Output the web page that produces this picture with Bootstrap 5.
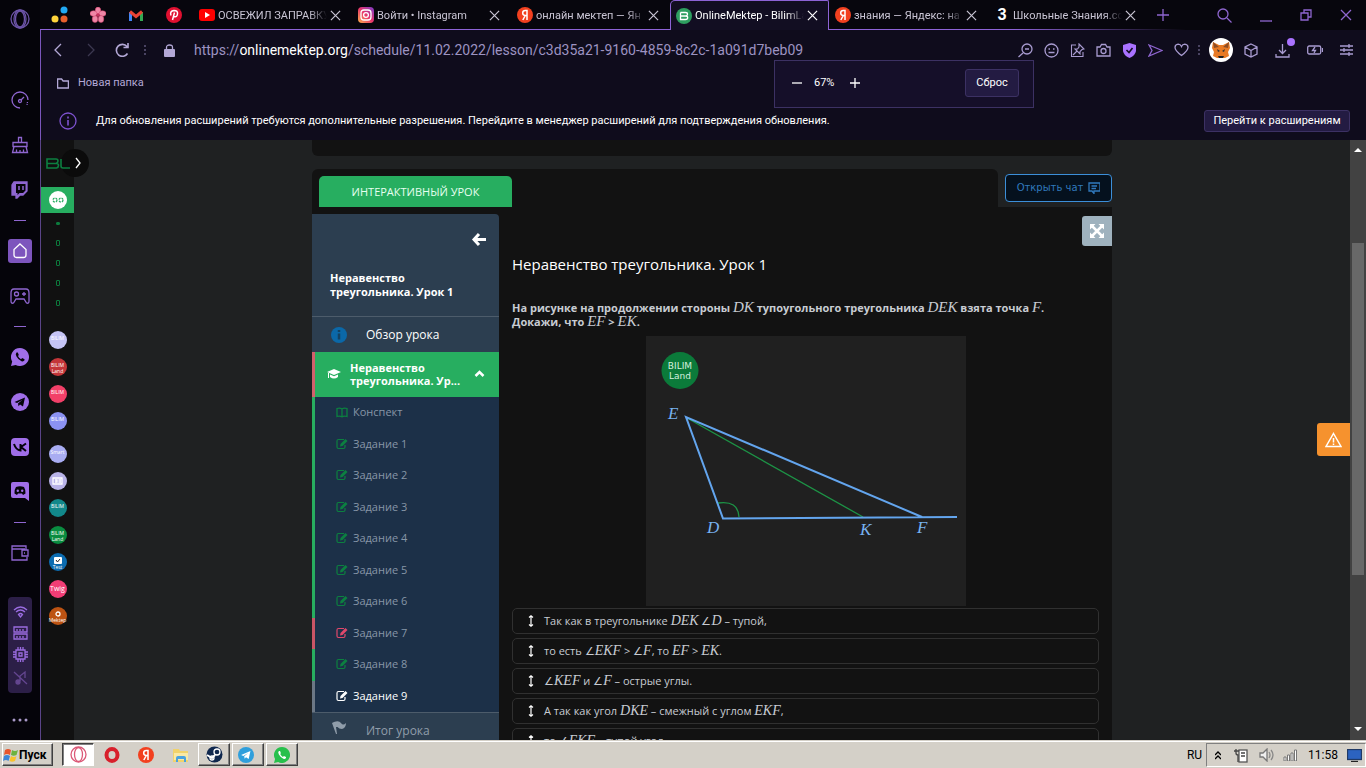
<!DOCTYPE html>
<html lang="ru">
<head>
<meta charset="utf-8">
<meta name="viewport" content="width=device-width, initial-scale=1">
<title>OnlineMektep - BilimLand</title>
<link href="https://cdn.jsdelivr.net/npm/bootstrap@5.3.0/dist/css/bootstrap.min.css" rel="stylesheet">
<style>
:root{--lav:#b3a8d6;--green:#27ae60;--dgreen:#0c8040}
body{font-family:Roboto,"Noto Sans",sans-serif;font-size:11px;line-height:16px;background:#07060d;color:#fff;overflow:hidden}
svg{display:block;flex:none;fill:none;stroke:currentColor;stroke-width:1.3}
button{padding:0;border:0;background:none;color:inherit;flex:none}
a{color:inherit;text-decoration:none}
/* opera sidebar */
.opbar{width:40px;color:#8f66d0;background:#05040a}
.slot{height:45px;width:40px;display:flex;align-items:center;justify-content:center;flex:none}
.slot.logo{height:38px;margin-bottom:39px;color:#6d55a8}
.dash{height:16px;width:12px;display:flex;align-items:center;flex:none}
.dash::before{content:"";flex:1;height:1px;background:#8f66d0}
.homebox{width:24px;height:24px;border-radius:3px;background:#7d55bd;color:#fff}
.sep{width:40px;height:1px;background:#5b4a80;margin:8px 0 14px}
.monitor{width:24px;height:96px;background:#2c1f47;border-radius:4px;color:#9a6ce0}
/* tab strip */
.strip{height:30px;background:#07060d;color:#c9c5d4;padding-left:1px}
.strip::after{content:"";position:absolute;left:0;right:180px;bottom:0;height:1px;background:linear-gradient(90deg,#8d63d6 85%,transparent)}
.pin{width:38px;height:30px}
.otab{width:159px;height:30px;padding:0 5px 0 6px;gap:3px;position:relative}
.otab .ttl{width:109px;padding-top:1px;white-space:nowrap;flex:none;-webkit-mask-image:linear-gradient(90deg,#000 84%,transparent);mask-image:linear-gradient(90deg,#000 84%,transparent)}
.otab.on{z-index:1;background:#120e22;color:#fff;border:1px solid #8d63d6;border-bottom:0;border-top-left-radius:5px;border-top-right-radius:2px;padding:0 4px 0 5px}
.win{color:#8f66d0}
/* toolbar */
.chrome{background:#0f0c1c;border-left:1px solid #7a56bb;color:var(--lav)}
.addr{height:40px}
.url{font-size:14px;line-height:20px;color:#9d93c2;white-space:nowrap}
.url b{font-weight:400;color:#fff}
.tools{color:#a89bd0}
.ell{width:2px;height:10px;background:repeating-linear-gradient(#4a4462 0 2px,transparent 2px 4px)}
.fox{width:24px;height:24px}
.marks{height:26px}
.notice{height:44px;color:#fff;padding-top:6px}
.obtn{background:#231b42;border:1px solid #3c3163;border-radius:3px;color:#fff;height:22px}
.zoompop{position:absolute;right:332px;top:60px;width:260px;height:48px;background:#150f29;border:1px solid #3c3163;z-index:5;color:#fff;padding:0 14px 2px 17px}
.zoompop .obtn{width:54px;height:28px}
/* page */
.pagebg{background:#1f2122;font-family:"Open Sans",sans-serif;min-height:0;border-left:1px solid #5a4487}
.rail{width:33px;background:#111;position:relative;color:var(--dgreen)}
.rail .bl{height:47px;width:24px}
.rail .cur{height:26px;width:33px;background:var(--green)}
.dots i{width:4px;height:6px;border:1px solid #0c7a3c;border-radius:1px;margin:7px 0}
.dots i:first-child{height:3px;background:#0c7a3c;margin:9px 0 8px}
.discs{gap:9px;margin-top:18px}
.disc{width:18px;height:18px;border-radius:50%;color:#fff;font-size:5px;line-height:6px}
.disc.gapped{margin-bottom:6px}
.railtog{position:absolute;left:20px;top:9px;width:28px;height:28px;border-radius:50%;background:#0b0b0b;color:#fff;z-index:2}
.lesson{max-width:800px;width:100%}
.prev{height:16px;background:#121212;border-radius:0 0 6px 6px;margin-bottom:13px}
.head{background:#121212;border-radius:6px 6px 0 0;height:38px;padding:7px 7px 0;margin-right:7px}
.gtab{width:193px;height:31px;background:var(--green);border-radius:5px 5px 0 0;font-size:11px;color:#e6fff0}
.chat{width:107px;height:28px;margin-top:5px;border:1px solid #3c8fd9;border-radius:4px;background:#05111e;color:#3079bd;font:10px/14px "DejaVu Sans",sans-serif;gap:5px}
.body1{background:#121212;position:relative;min-height:0}
.full{position:absolute;right:0;top:9px;width:30px;height:30px;background:#9fb2be;border-radius:3px 0 0 3px;color:#fff}
.side{width:187px;margin-top:7px;background:#2c3e50;border-radius:0 4px 0 0;font-size:12px;line-height:14px}
.side .top1{height:103px;border-bottom:1px solid #4d5c6b;padding:18px 12px 0 18px;font-weight:700;font-size:11px}
.side .ov{height:35px;padding-left:18px;gap:18px}
.side .act{height:45px;background:var(--green);border-left:3px solid #d2606c;padding:0 14px 2px 12px;font-weight:700;font-size:11px;line-height:13px;gap:9px}
.tasks{background:#1c3048;height:315px;color:#8796a7;font-size:11px}
.tasks a{border-left:3px solid var(--green);padding:0 0 1px 21px;gap:5px;flex:1}
.tasks svg{color:var(--dgreen)}
.tasks .bad{border-color:#c95566}.tasks .bad svg{color:#e0486b}
.tasks .now{border-color:#6b7785;color:#fff}.tasks .now svg{color:#fff}
.side .fin{height:44px;border-top:1px solid #4d5c6b;padding:7px 0 0 18px;gap:18px;color:#909daa}
.main1{padding:47px 13px 0;font-size:11px;color:#d3d7dc}
.main1 h1{font-size:15px;line-height:20px;color:#fff;font-weight:400;margin:0 0 27px}
.main1 p{font-weight:700;line-height:14px;margin:0 0 7px;color:#c8ccd2}
.main1 em{font-family:"Liberation Serif",serif;font-size:15px;line-height:12px;font-weight:400}
.main1 .opt em{font-size:14px}
.fig{width:320px;height:270px;background:#202020;margin:0 auto 2px}
.fig text{stroke:none;fill:#78b2f0;font:italic 17px "Liberation Serif",serif}
.fig .lg{fill:#d5f0de;font:9px "DejaVu Sans",sans-serif}
.opt{height:26px;border:1px solid #303030;border-radius:5px;margin-bottom:4px;padding-left:14px;gap:9px;white-space:nowrap;list-style:none;color:#c8ccd2}
.opt svg{color:#fff}
.warn{position:absolute;right:0;top:283px;width:33px;height:33px;background:#f6922e;border-radius:3px 0 0 3px;color:#fff}
.sb{width:16px;background:#424242;color:#fff}
.sb .thumb{width:12px;height:332px;background:#686868}
/* taskbar */
.taskbar{height:28px;background:#d4d0c8;border-top:1px solid #d4d0c8;box-shadow:inset 0 1px #fff;color:#000;padding:2px 0 0 2px}
.tb{height:23px;width:32px;border:1px solid;border-color:#fff #404040 #404040 #fff;box-shadow:inset -1px -1px #808080}
.tb.down{border-color:#404040 #fff #fff #404040;background:#fff;box-shadow:inset 1px 1px #808080}
.tb.start{width:51px;font-weight:700;font-size:12px}
.tb.flat{border-color:transparent;box-shadow:none}
.tray{border:1px solid;border-color:#808080 #fff #fff #808080;height:24px;padding:0 3px 0 8px;gap:9px}
.lang,.clock{font-size:12px}
</style>
</head>
<body class="vh-100 d-flex flex-column">
<svg width="0" height="0" class="position-absolute">
<symbol id="x" viewBox="0 0 12 12"><path d="M1 1l10 10M11 1L1 11"/></symbol>
<symbol id="ya" viewBox="0 0 16 16"><circle cx="8" cy="8" r="8" fill="#f2401f" stroke="none"/><path d="M10 13V3.500H8.300C6.500 3.500 5.700 4.700 5.700 6c0 1.500.9 2.400 2.600 2.400H10M8.300 8.500L5.800 13" stroke="#fff" stroke-width="1.500"/></symbol>
<symbol id="pen" viewBox="0 0 12 12"><path d="M8 1.500H2.500Q1 1.500 1 3v6q0 1.500 1.500 1.500h5Q9 10.500 9 9V7" stroke-width="1.200"/><path d="M4 8.500l.5-2.500L9.500 1l2 2-5 5z" fill="currentColor" stroke="none"/></symbol>
<symbol id="drag" viewBox="0 0 8 12"><path d="M4 1v10M2 2.500L4 .8l2 1.700M2 9.500L4 11.200l2-1.700" stroke-width="1.200"/></symbol>
<symbol id="tg" viewBox="0 0 18 18"><circle cx="9" cy="9" r="9" fill="currentColor" stroke="none"/><path d="M3.500 9l10.500-4.500L12 13.500l-3-2-1.500 1.800L7 10.500l4.500-3.700L6 10z" fill="var(--in,#05040a)" stroke="none"/></symbol>
<symbol id="wa" viewBox="0 0 18 18"><path d="M9 0a9 9 0 1 1-4.300 16.900L0 18l1.200-4.500A9 9 0 0 1 9 0z" fill="currentColor" stroke="none"/><path d="M5.500 4.500q-1.500 1.500 0 4 2 3.500 5 4.800 2 .6 3-1v-1l-2.300-1.200-1.200 1.100Q7.700 10 7 8l.8-1-1-2.500z" fill="var(--in,#05040a)" stroke="none"/></symbol>
</svg>

<div class="d-flex flex-fill" style="min-height:0">
 <nav class="opbar d-flex flex-column align-items-center flex-shrink-0 overflow-hidden" aria-label="Opera">
  <a class="slot logo" href="#"><svg width="20" height="20"><circle cx="10" cy="10" r="9"/><ellipse cx="10" cy="10" rx="4.500" ry="8"/><ellipse cx="10" cy="10" rx="6" ry="9"/></svg></a>
  <a class="slot" href="#"><svg width="18" height="18"><path d="M9 17A8 8 0 1 1 17 9"/><path d="M16.500 11l-.5 3" stroke-dasharray="1 1"/><circle cx="9" cy="10" r="1.500"/><path d="M10 9l3-3"/></svg></a>
  <a class="slot" href="#"><svg width="18" height="18"><path d="M7.500 6V1.500h3V6M2 6.500h14v4H2zM3 10.500L1.500 16.500h15L15 10.500M5.500 16v-2.500M9 16v-2M12.500 16v-2.500"/></svg></a>
  <a class="slot" href="#"><svg width="18" height="18"><path d="M3 1h13v9l-4 4H9l-3 3H5v-3H1V4z" fill="currentColor"/><path d="M5 3h9.500v6.500L12 12H8.500l-2 2v-2H5z" fill="#05040a" stroke="none"/><path d="M8 5v4M12 5v4" stroke-width="1.500"/></svg></a>
  <span class="dash"></span>
  <a class="slot" href="#"><span class="homebox d-flex align-items-center justify-content-center"><svg width="16" height="16" stroke-width="1.500"><path d="M8 1L14 6.500V12q0 2.500-2.500 2.500h-7Q2 14.500 2 12V6.500z"/></svg></span></a>
  <a class="slot" href="#"><svg width="20" height="16"><path d="M4 1h12q3 0 3 4v8q0 3-2.500 2L14 11H6l-2.500 4Q1 16 1 13V5q0-4 3-4z"/><circle cx="6.500" cy="6" r="2"/><path d="M12 6h4M14 4v4"/></svg></a>
  <span class="dash"></span>
  <a class="slot" href="#"><svg width="18" height="18" color="#a06ee8"><use href="#wa"/></svg></a>
  <a class="slot" href="#"><svg width="18" height="18" color="#a06ee8"><use href="#tg"/></svg></a>
  <a class="slot" href="#"><svg width="18" height="18"><rect width="18" height="18" rx="4" fill="#a06ee8" stroke="none"/><path d="M3 6q2 6 6.500 6.500V6M15 5.500L10 9l5 4" stroke="#05040a" stroke-width="2"/></svg></a>
  <a class="slot" href="#"><svg width="18" height="19"><path d="M2 0h14q2 0 2 2v17l-4-3H2q-2 0-2-2V2q0-2 2-2z" fill="#a06ee8" stroke="none"/><path d="M5 5q4-1.500 8 0 2 3.500 1.500 6.500L12 13l-1-1.500H7L6 13l-2.500-1.500Q3 8 5 5z" fill="#05040a" stroke="none"/><circle cx="6.800" cy="8.700" r="1.200" fill="#a06ee8" stroke="none"/><circle cx="11.200" cy="8.700" r="1.200" fill="#a06ee8" stroke="none"/></svg></a>
  <span class="dash"></span>
  <a class="slot" href="#"><svg width="18" height="16"><path d="M15 5V1H1v14h15v-3M1 4h13M16 5h-5v6h6V5zM13 8h1"/></svg></a>
  <span class="sep"></span>
  <div class="monitor d-flex flex-column align-items-center justify-content-around py-1 flex-shrink-0">
   <svg width="15" height="13"><path d="M1 5q6.500-6 13 0M3 7q4.500-4 9 0M5.500 9.500Q7.500 7.500 9.500 9.500L7.500 12z"/></svg>
   <svg width="15" height="14"><path d="M1 1h13v5H1zM1 8h13v5H1zM4 3v2M7 3v2M10 3v2M4 10v2M7 10v2M10 10v2"/></svg>
   <svg width="15" height="15"><path d="M3 3h9v9H3zM6 6h3v3H6zM5 0v3M7.500 0v3M10 0v3M5 12v3M7.500 12v3M10 12v3M0 5h3M0 7.500h3M0 10h3M12 5h3M12 7.500h3M12 10h3"/></svg>
   <svg width="15" height="15" color="#644690"><path d="M1 2l13 12M7 11V6l5-4v6"/><circle cx="5" cy="12" r="2" fill="currentColor"/></svg>
  </div>
  <a class="slot mt-1" href="#"><svg width="16" height="4" style="fill:#a99ac8;stroke:none"><circle cx="2" cy="2" r="1.500"/><circle cx="8" cy="2" r="1.500"/><circle cx="14" cy="2" r="1.500"/></svg></a>
 </nav>

 <div class="d-flex flex-column flex-fill position-relative" style="min-width:0">
  <header class="strip d-flex align-items-center position-relative flex-shrink-0">
   <a class="pin d-flex align-items-center justify-content-center" href="#"><svg width="18" height="18" style="stroke:none"><circle cx="13" cy="4" r="3.500" fill="#21a9f3"/><circle cx="4" cy="13" r="3.500" fill="#ffd43b"/><circle cx="13" cy="13" r="3.500" fill="#e8602c"/></svg></a>
   <a class="pin d-flex align-items-center justify-content-center" href="#"><svg width="16" height="16" style="stroke:#d33c68;stroke-width:.5;fill:#ee86a6"><ellipse cx="8" cy="3.500" rx="2.800" ry="3.500"/><ellipse cx="12.500" cy="6.500" rx="3.500" ry="2.800"/><ellipse cx="11" cy="12" rx="2.800" ry="3.500"/><ellipse cx="5" cy="12" rx="2.800" ry="3.500"/><ellipse cx="3.500" cy="6.500" rx="3.500" ry="2.800"/><circle cx="8" cy="8" r="1.500" fill="#c02f5a"/></svg></a>
   <a class="pin d-flex align-items-center justify-content-center" href="#"><svg width="14" height="11" style="stroke-width:3"><path d="M1.500 11V2" stroke="#4285f4"/><path d="M12.500 11V2" stroke="#34a853"/><path d="M1 1.500l6 5 6-5" stroke="#ea4335"/></svg></a>
   <a class="pin d-flex align-items-center justify-content-center" href="#"><svg width="16" height="16"><circle cx="8" cy="8" r="8" fill="#e01030" stroke="none"/><path d="M6.500 13L8.500 5.500M5 8.500Q3.500 4 8 3.500q4 0 3.500 3.500T8 9.500" stroke="#fff" stroke-width="1.500"/></svg></a>
   <a class="otab d-flex align-items-center" href="#"><svg width="16" height="12"><rect width="16" height="12" rx="3" fill="#f00" stroke="none"/><path d="M6 3l5 3-5 3z" fill="#fff" stroke="none"/></svg><span class="ttl">ОСВЕЖИЛ ЗАПРАВКУ</span><svg width="11" height="11"><use href="#x"/></svg></a>
   <a class="otab d-flex align-items-center" href="#"><svg width="16" height="16"><defs><linearGradient id="ig" x1="0" y1="1" x2="1" y2="0"><stop stop-color="#fdb24a"/><stop offset=".5" stop-color="#e8356b"/><stop offset="1" stop-color="#7a3bd0"/></linearGradient></defs><rect width="16" height="16" rx="4" fill="url(#ig)" stroke="none"/><rect x="3" y="3" width="10" height="10" rx="3" stroke="#fff"/><circle cx="8" cy="8" r="2.400" stroke="#fff"/></svg><span class="ttl">Войти • Instagram</span><svg width="11" height="11"><use href="#x"/></svg></a>
   <a class="otab d-flex align-items-center" href="#"><svg width="16" height="16"><use href="#ya"/></svg><span class="ttl">онлайн мектеп — Ян</span><svg width="11" height="11"><use href="#x"/></svg></a>
   <a class="otab on d-flex align-items-center" href="#"><svg width="16" height="16"><circle cx="8" cy="8" r="8" fill="#2e9e60" stroke="none"/><path d="M4.500 4.500h5q2 0 2 1.700T9.500 8h-5M9.500 8q2.200 0 2.200 1.700T9.500 11.500h-5v-7" stroke="#fff"/></svg><span class="ttl">OnlineMektep - BilimLa</span><svg width="11" height="11"><use href="#x"/></svg></a>
   <a class="otab d-flex align-items-center" href="#"><svg width="16" height="16"><use href="#ya"/></svg><span class="ttl">знания — Яндекс: на</span><svg width="11" height="11"><use href="#x"/></svg></a>
   <a class="otab d-flex align-items-center" href="#"><b class="text-white text-center flex-shrink-0 fs-6" style="width:16px">3</b><span class="ttl">Школьные Знания.cc</span><svg width="11" height="11"><use href="#x"/></svg></a>
   <div class="win d-flex align-items-center flex-fill">
    <button style="margin-left:10px" aria-label="Новая вкладка"><svg width="12" height="12"><path d="M6 0v12M0 6h12"/></svg></button>
    <span class="flex-fill"></span>
    <div class="d-flex align-items-center" style="gap:28px;padding-right:14px">
    <button aria-label="Поиск"><svg width="15" height="15"><circle cx="6" cy="6" r="5"/><path d="M10 10l4.500 4.500"/></svg></button>
    <button aria-label="Свернуть"><svg width="12" height="14"><path d="M0 13h12"/></svg></button>
    <button aria-label="Развернуть"><svg width="12" height="12"><path d="M1 4h7v7H1zM4 4V1h7v7H8"/></svg></button>
    <button aria-label="Закрыть"><svg width="12" height="12"><use href="#x"/></svg></button></div>
   </div>
  </header>

  <div class="chrome flex-shrink-0">
   <div class="addr d-flex align-items-center">
    <button class="ms-2 ps-1" aria-label="Назад"><svg width="10" height="14"><path d="M8 1L2 7l6 6"/></svg></button>
    <button style="margin-left:23px;color:#3c3850" aria-label="Вперёд"><svg width="10" height="14"><path d="M2 1l6 6-6 6"/></svg></button>
    <button style="margin-left:19px" aria-label="Обновить"><svg width="15" height="14" style="stroke-width:1.600"><path d="M12.500 10.500A6 6 0 1 1 12 3.500M13 0v4.500H8.500"/></svg></button>
    <span class="ell" style="margin:0 18px 0 14px"></span>
    <svg width="11" height="13"><rect y="5" width="11" height="8" rx="1" fill="currentColor" stroke="none"/><path d="M2.500 6V3.500q0-2.500 3-2.500t3 2.500V6"/></svg>
    <div class="url flex-fill" role="textbox" aria-label="Адрес" style="margin-left:19px">https://<b>onlinemektep.org</b>/schedule/11.02.2022/lesson/c3d35a21-9160-4859-8c2c-1a091d7beb09</div>
    <div class="tools d-flex align-items-center" style="gap:11px">
     <button><svg width="15" height="15"><circle cx="9" cy="6" r="5"/><path d="M5 10l-4.500 4M7 6h4"/></svg></button>
     <button><svg width="15" height="15"><circle cx="7.500" cy="7.500" r="6.500"/><path d="M4.500 6h1.500M9 6h1.500M4.500 9.500h6"/></svg></button>
     <button><svg width="15" height="15" style="stroke-width:1.100"><path d="M6 2H1.500v11.500H13V9M3 12l4-4M9 1l5 5-2 .5-2 2 0 2.500L5 6h2.500l1.500-2z"/></svg></button>
     <button><svg width="15" height="15"><path d="M1 4h3l1.500-2.500h4L11 4h3v9H1z"/><circle cx="7.500" cy="8" r="2.500"/></svg></button>
     <button><svg width="15" height="15"><path d="M7.500 0L14 2v6q-1 5-6.500 7Q2 13 1 8V2z" fill="#a972ff" stroke="none"/><path d="M4.500 7l2.500 2.500L10.500 5" stroke="#120e22" stroke-width="1.600"/></svg></button>
     <button style="color:#8f66d0"><svg width="15" height="13"><path d="M1 1l13 5.500L1 12l3-5.500z"/></svg></button>
     <button><svg width="15" height="14"><path d="M7.500 12.500Q1 7.500 1 4.500T4.200 1.200Q6.500 1.200 7.500 3.500 8.500 1.200 10.800 1.200 14 1.500 14 4.500T7.500 12.500z"/></svg></button>
    </div>
    <span class="ell" style="margin:0 9px"></span>
    <div class="tools d-flex align-items-center" style="gap:17px;padding-right:13px">
     <button style="margin-right:-6px"><svg class="fox" viewBox="0 0 24 24" style="stroke:none"><circle cx="12" cy="12" r="12" fill="#fff"/><path d="M4 4l6 3h4l6-3 1 6-2 4 1 4-4 2h-8l-4-2 1-4-2-4z" fill="#e87a25"/><path d="M4 4l6 5-5 1zM20 4l-6 5 5 1z" fill="#8e4d25"/><path d="M9 18h6l-1 2h-4z" fill="#222"/><path d="M8 11l3 2-2 1zM16 11l-3 2 2 1z" fill="#333"/></svg></button>
     <button><svg width="14" height="15"><path d="M7 1l6 3v7l-6 3-6-3V4zM1 4l6 3.500L13 4M7 7.500V14"/></svg></button>
     <button class="position-relative"><svg width="15" height="15"><path d="M7.500 1v9M4 7l3.500 3.500L11 7M1 11v3h13v-3"/></svg><span class="position-absolute rounded-circle" style="width:8px;height:8px;background:#a972ff;right:-5px;top:-5px"></span></button>
     <button><svg width="16" height="10"><rect x=".7" y="1" width="13" height="8" rx="1.500"/><path d="M15.500 3v4M8 2L5.500 5.500h3L7 8"/></svg></button>
     <button><svg width="13" height="12"><path d="M0 2h13M0 6h13M0 10h13M9 0v4M4 4v4M9 8v4"/></svg></button>
    </div>
   </div>
   <div class="marks d-flex align-items-center">
    <a class="d-flex align-items-center" href="#" style="margin-left:16px;gap:9px"><svg width="12" height="11"><path d="M.6 10V1h4l1.500 2h5.300v7z"/></svg>Новая папка</a>
   </div>
   <div class="notice d-flex align-items-center">
    <svg width="18" height="18" style="margin:0 19px 0 18px" color="#7d52cf"><circle cx="9" cy="9" r="8"/><path d="M9 8v5.500M9 4.500v2" stroke-width="1.600"/></svg>
    <span class="flex-fill text-nowrap">Для обновления расширений требуются дополнительные разрешения. Перейдите в менеджер расширений для подтверждения обновления.</span>
    <button class="obtn me-3" style="width:146px">Перейти к расширениям</button>
   </div>
  </div>
  <div class="zoompop d-flex align-items-center">
   <button aria-label="Уменьшить"><svg width="10" height="10"><path d="M0 5h10"/></svg></button>
   <span style="margin:0 16px 0 12px">67%</span>
   <button aria-label="Увеличить"><svg width="10" height="10"><path d="M5 0v10M0 5h10"/></svg></button>
   <button class="obtn ms-auto">Сброс</button>
  </div>

  <div class="d-flex flex-fill" style="min-height:0">
   <div class="pagebg d-flex flex-fill position-relative overflow-hidden">
    <nav class="rail d-flex flex-column align-items-center flex-shrink-0" aria-label="Разделы">
     <button class="railtog d-flex align-items-center justify-content-end pe-2" aria-label="Открыть меню"><svg width="6" height="12"><path d="M1 1l4 5-4 5"/></svg></button>
     <a class="bl d-flex align-items-center position-relative z-3" href="#"><svg width="24" height="11" style="stroke-width:1.600"><path d="M1 1h9q2 0 2 2t-2 2.500H1h9.500q2 0 2 2t-2 2.500H1zM15 1v7q0 2 2 2h7"/></svg></a>
     <a class="cur d-flex align-items-center justify-content-center" href="#"><span class="disc bg-white d-flex align-items-center justify-content-center"><svg width="14" height="6" color="#27ae60"><circle cx="4" cy="3" r="2" stroke-dasharray="2 1"/><circle cx="10" cy="3" r="2" stroke-dasharray="2 1"/></svg></span></a>
     <div class="dots d-flex flex-column align-items-center"><i></i><i></i><i></i><i></i><i></i></div>
     <div class="discs d-flex flex-column align-items-center">
      <a class="disc text-center pt-1" style="background:#c5c4f5" href="#">BILIM</a>
      <a class="disc text-center pt-1" style="background:#c43639" href="#">BILIM<br>Land</a>
      <a class="disc text-center pt-1" style="background:#f24068" href="#">BILIM</a>
      <a class="disc gapped text-center pt-1" style="background:#8b92f2" href="#">BILIM</a>
      <a class="disc text-center pt-1" style="background:#a9adf2" href="#">Smart</a>
      <a class="disc d-flex align-items-center justify-content-center" style="background:#b9b4e8" href="#"><svg width="11" height="8"><path d="M1 1h9v6H1zM3 3h2v2H3M6.500 3H9M6.500 5H9"/></svg></a>
      <a class="disc text-center pt-1" style="background:#12888a" href="#">BILIM</a>
      <a class="disc text-center pt-1" style="background:#0a8c40" href="#">BILIM<br>Land</a>
      <a class="disc d-flex flex-column align-items-center pt-1" style="background:#0c6cb0" href="#"><svg width="8" height="7"><rect width="8" height="7" rx="1" fill="#fff" stroke="none"/><path d="M2 3l1.500 2L6 2" stroke="#222" stroke-width="1"/></svg>Test</a>
      <a class="disc text-center" style="background:#f23d75;font-size:7px;line-height:17px" href="#">Twig</a>
      <a class="disc d-flex flex-column align-items-center pt-1" style="background:#bd5312" href="#"><svg width="6" height="6"><circle cx="3" cy="3" r="2"/></svg>Mektep</a>
     </div>
    </nav>

    <main class="lesson mx-auto d-flex flex-column">
     <div class="prev flex-shrink-0"></div>
     <div class="d-flex flex-shrink-0" style="height:38px">
      <div class="head flex-fill"><button class="gtab">ИНТЕРАКТИВНЫЙ УРОК</button></div>
      <button class="chat d-flex align-items-center justify-content-center">Открыть чат<svg width="12" height="12"><path d="M1 1h11v8H6v2.500L4 9H1zM3.500 4H9M3.500 6.500H8"/></svg></button>
     </div>
     <div class="body1 d-flex flex-fill">
      <button class="full d-flex align-items-center justify-content-center" aria-label="Во весь экран"><svg width="16" height="16"><path d="M3 3l10 10M13 3L3 13" stroke-width="2.500"/><path d="M1 1h5.500L1 6.500zM15 1v5.500L9.500 1zM1 15V9.500L6.500 15zM15 15H9.500L15 9.500z" fill="currentColor" stroke="none"/></svg></button>
      <nav class="side flex-shrink-0" aria-label="Содержание">
       <div class="top1"><div class="d-flex justify-content-end"><svg width="16" height="15" style="stroke-width:3"><path d="M8 2L3 7.500 8 13M3 7.500h12"/></svg></div>
        <div style="margin-top:24px">Неравенство<br>треугольника. Урок 1</div></div>
       <a class="ov d-flex align-items-center" href="#"><svg width="18" height="18"><circle cx="9" cy="9" r="8" fill="#0b68a8" stroke="none"/><path d="M9 4v2M9 7.500v6" stroke="#134263" stroke-width="2.500"/></svg>Обзор урока</a>
       <a class="act d-flex align-items-center" href="#"><svg width="14" height="10" style="stroke:none"><path d="M0 3l7-3 7 3-7 3zM3 5.500l4 1.800 4-1.800V8Q7 11 3 8zM1 4h1v5H1z" fill="#fff"/></svg><span class="flex-fill text-nowrap">Неравенство<br>треугольника. Ур...</span><svg width="11" height="7" style="stroke-width:2.500"><path d="M1.500 6l4-4 4 4"/></svg></a>
       <div class="tasks d-flex flex-column">
        <a class="d-flex align-items-center" href="#"><svg width="12" height="11"><path d="M6 2v8M6 2Q4 .5 1 1.500V9.500Q4 8.500 6 10M6 2q2-1.500 5-.5v8Q8 8.500 6 10"/></svg>Конспект</a>
        <a class="d-flex align-items-center" href="#"><svg width="12" height="12"><use href="#pen"/></svg>Задание 1</a>
        <a class="d-flex align-items-center" href="#"><svg width="12" height="12"><use href="#pen"/></svg>Задание 2</a>
        <a class="d-flex align-items-center" href="#"><svg width="12" height="12"><use href="#pen"/></svg>Задание 3</a>
        <a class="d-flex align-items-center" href="#"><svg width="12" height="12"><use href="#pen"/></svg>Задание 4</a>
        <a class="d-flex align-items-center" href="#"><svg width="12" height="12"><use href="#pen"/></svg>Задание 5</a>
        <a class="d-flex align-items-center" href="#"><svg width="12" height="12"><use href="#pen"/></svg>Задание 6</a>
        <a class="bad d-flex align-items-center" href="#"><svg width="12" height="12"><use href="#pen"/></svg>Задание 7</a>
        <a class="d-flex align-items-center" href="#"><svg width="12" height="12"><use href="#pen"/></svg>Задание 8</a>
        <a class="now d-flex align-items-center" href="#"><svg width="12" height="12"><use href="#pen"/></svg>Задание 9</a>
       </div>
       <a class="fin d-flex" href="#"><svg width="18" height="18" style="stroke:none"><path d="M2 3l2-1q5-2 7 1t5 0q0 5-4 6-3 0-4.500-2L6 7l1 7H6z" fill="#909daa"/></svg><span class="pt-1">Итог урока</span></a>
      </nav>
      <article class="main1 flex-fill">
       <h1>Неравенство треугольника. Урок 1</h1>
       <p>На рисунке на продолжении стороны <em>DK</em> тупоугольного треугольника <em>DEK</em> взята точка <em>F</em>.<br>Докажи, что <em>EF</em> &gt; <em>EK</em>.</p>
       <svg class="fig" width="320" height="270" role="img" aria-label="Треугольник DEF">
        <circle cx="34" cy="34.500" r="18.500" fill="#0b7a3a" stroke="none"/>
        <text class="lg" x="34" y="33" text-anchor="middle">BILIM</text><text class="lg" x="34" y="43" text-anchor="middle">Land</text>
        <path d="M41 82L217 181" stroke="#1d9346" stroke-width="1.300"/><path d="M72 167Q92 164 93 181" stroke="#1d9346" stroke-width="1.300"/>
        <path d="M311 181L77 182.500 40 81 276 181" stroke="#63a5ee" stroke-width="2"/>
        <text x="22" y="83">E</text><text x="61" y="197">D</text><text x="214" y="199">K</text><text x="271" y="197">F</text>
       </svg>
       <ul class="p-0 m-0">
        <li class="opt d-flex align-items-center"><svg width="8" height="12"><use href="#drag"/></svg><span>Так как в треугольнике <em>DEK</em> ∠<em>D</em> – тупой,</span></li>
        <li class="opt d-flex align-items-center"><svg width="8" height="12"><use href="#drag"/></svg><span>то есть ∠<em>EKF</em> &gt; ∠<em>F</em>, то <em>EF</em> &gt; <em>EK</em>.</span></li>
        <li class="opt d-flex align-items-center"><svg width="8" height="12"><use href="#drag"/></svg><span>∠<em>KEF</em> и ∠<em>F</em> – острые углы.</span></li>
        <li class="opt d-flex align-items-center"><svg width="8" height="12"><use href="#drag"/></svg><span>А так как угол <em>DKE</em> – смежный с углом <em>EKF</em>,</span></li>
        <li class="opt d-flex align-items-center"><svg width="8" height="12"><use href="#drag"/></svg><span>то ∠<em>EKF</em> – тупой угол.</span></li>
       </ul>
      </article>
     </div>
    </main>
    <button class="warn d-flex align-items-center justify-content-center" aria-label="Сообщить об ошибке"><svg width="17" height="16"><path d="M8.500 1.500L16 14.500H1zM8.500 6v4.500M8.500 11.500v1.500" stroke-width="1.500"/></svg></button>
   </div>
   <div class="sb d-flex flex-column align-items-center flex-shrink-0" aria-hidden="true">
    <svg width="8" height="5" style="margin-top:7px"><path d="M0 5l4-4 4 4z" fill="#fff" stroke="none"/></svg>
    <div class="thumb" style="margin-top:91px"></div>
    <svg width="8" height="5" class="mt-auto mb-2"><path d="M0 0l4 4 4-4z" fill="#fff" stroke="none"/></svg>
   </div>
  </div>
 </div>
</div>

<footer class="taskbar d-flex align-items-start flex-shrink-0">
 <button class="tb start d-flex align-items-center"><svg width="16" height="15" style="stroke:none"><path d="M2 3q3-2 6 0L7 8Q4 6 1 8z" fill="#e8552d"/><path d="M9 3q3 2 6 0l-1.500 5q-3 1.500-5.500 0z" fill="#6cb33f"/><path d="M1 9q3-2 6 0l-1.500 5Q3 12 0 14z" fill="#3d86d8"/><path d="M8 9q3 2 5.500 0L12 14q-3 1.500-5.500 0z" fill="#f8c32c"/></svg>Пуск</button>
 <div class="d-flex" style="margin-left:9px;gap:2px">
  <button class="tb down d-flex align-items-center justify-content-center"><svg width="17" height="17" color="#dc5a78"><circle cx="8.500" cy="8.500" r="7.500"/><ellipse cx="8.500" cy="8.500" rx="4" ry="7"/></svg></button>
  <button class="tb flat d-flex align-items-center justify-content-center"><svg width="16" height="16"><ellipse cx="8" cy="8" rx="5.500" ry="6" stroke="#d8202c" stroke-width="4"/></svg></button>
  <button class="tb flat d-flex align-items-center justify-content-center"><svg width="16" height="16"><use href="#ya"/></svg></button>
  <button class="tb flat d-flex align-items-center justify-content-center"><svg width="17" height="16" style="stroke:none"><path d="M1 2h6l1 2h8v11H1z" fill="#f1d36c"/><path d="M2 6h14v7H2z" fill="#f9e9a6"/><path d="M4 15v-4q0-2 2-2h6q2 0 2 2v4h-2v-3H6v3z" fill="#4aa3df"/></svg></button>
  <button class="tb d-flex align-items-center justify-content-center"><svg width="17" height="17"><circle cx="8.500" cy="8.500" r="8" fill="#10284e" stroke="none"/><circle cx="11" cy="6" r="3" stroke="#fff"/><path d="M1 9l5 3 3-3" stroke="#fff" stroke-width="2"/><circle cx="6" cy="12" r="2" stroke="#fff"/></svg></button>
  <button class="tb d-flex align-items-center justify-content-center pe-1"><svg width="16" height="16" color="#2f9fdc" style="--in:#fff"><use href="#tg"/></svg></button>
  <button class="tb d-flex align-items-center justify-content-center"><svg width="16" height="16" color="#28c04c" style="--in:#fff"><use href="#wa"/></svg></button>
 </div>
 <span class="lang ms-auto me-1 pt-1">RU</span>
 <div class="tray d-flex align-items-center">
  <svg width="6" height="9" class="me-1"><path d="M0 4l3-3 3 3M0 8l3-3 3 3"/></svg>
  <svg width="16" height="16"><rect x="5" y="3" width="8" height="12" fill="#fff" stroke="#555"/><path d="M2 2v4q0 2 2 2v7M0 4h5M7 6h4M7 9h4" stroke="#444"/></svg>
  <svg width="15" height="14"><path d="M1 5h3l4-4v12L4 9H1z" fill="#eee" stroke="#777"/><path d="M10 4q2 3 0 6M12 2q4 5 0 10" stroke="#888"/></svg>
  <svg width="16" height="12"><path d="M1 8h2v4H1zM4.500 6h2v6h-2zM8 4h2v8H8zM11.500 1h2v11h-2z" fill="#fff" stroke="#777" stroke-width="1"/></svg>
  <span class="clock">11:58</span>
  <svg width="15" height="13"><rect x=".5" y=".5" width="14" height="10" fill="#2c63c0" stroke="#203a66"/><path d="M4 12.500h7" stroke="#222"/></svg>
 </div>
</footer>
<script src="https://cdn.jsdelivr.net/npm/bootstrap@5.3.0/dist/js/bootstrap.bundle.min.js"></script>
</body>
</html>
